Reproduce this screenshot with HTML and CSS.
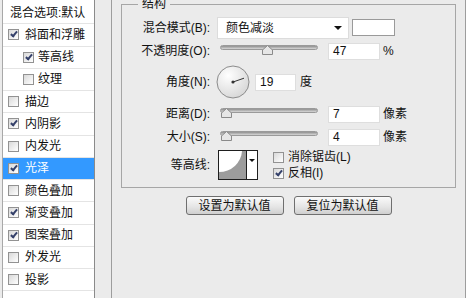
FILE: index.html
```html
<!DOCTYPE html>
<html lang="zh-CN">
<head>
  <meta charset="UTF-8">
  <title>图层样式 - 光泽</title>
  <link rel="stylesheet" href="styles.css">
</head>
<body>
  <ul class="style-list">
    <li class="style-item head">混合选项:默认</li>
    <li class="style-item"><span class="check is-on"></span>斜面和浮雕</li>
    <li class="style-item sub"><span class="check is-on"></span>等高线</li>
    <li class="style-item sub"><span class="check"></span>纹理</li>
    <li class="style-item"><span class="check"></span>描边</li>
    <li class="style-item"><span class="check is-on"></span>内阴影</li>
    <li class="style-item"><span class="check"></span>内发光</li>
    <li class="style-item is-selected"><span class="check is-on"></span>光泽</li>
    <li class="style-item"><span class="check"></span>颜色叠加</li>
    <li class="style-item"><span class="check is-on"></span>渐变叠加</li>
    <li class="style-item"><span class="check is-on"></span>图案叠加</li>
    <li class="style-item"><span class="check"></span>外发光</li>
    <li class="style-item"><span class="check"></span>投影</li>
  </ul>

  <div class="style-panel">
    <div class="group">
      <span class="group-title">结构</span>

      <div class="row row-blend">
        <label class="row-label">混合模式(B):</label>
        <div class="select">颜色减淡<span class="select-arrow"></span></div>
        <span class="swatch"></span>
      </div>

      <div class="row row-opacity">
        <label class="row-label">不透明度(O):</label>
        <div class="slider">
          <span class="track"></span>
          <svg class="thumb" style="left: 45px" width="11" height="10" viewBox="0 0 11 10">
            <path d="M5.5 0.5 L10.5 5 V9.5 H0.5 V5 Z" fill="#e6e6e6" stroke="#8a8a8a"/>
          </svg>
        </div>
        <span class="field">47</span>
        <span class="unit">%</span>
      </div>

      <div class="row row-angle">
        <label class="row-label">角度(N):</label>
        <svg class="dial" width="34" height="34" viewBox="0 0 34 34">
          <defs>
            <radialGradient id="dial-fill" cx="0.35" cy="0.3" r="0.8">
              <stop offset="0" stop-color="#ffffff"/>
              <stop offset="1" stop-color="#d4d4d4"/>
            </radialGradient>
          </defs>
          <circle cx="17" cy="17" r="16" fill="url(#dial-fill)" stroke="#8c8c8c"/>
          <line x1="17" y1="17" x2="28" y2="13.2" stroke="#333" stroke-width="1"/>
          <circle cx="17" cy="17" r="1.6" fill="#333"/>
        </svg>
        <span class="field field-short">19</span>
        <span class="unit">度</span>
      </div>

      <div class="row row-distance">
        <label class="row-label">距离(D):</label>
        <div class="slider">
          <span class="track"></span>
          <svg class="thumb" style="left: 4px" width="11" height="10" viewBox="0 0 11 10">
            <path d="M5.5 0.5 L10.5 5 V9.5 H0.5 V5 Z" fill="#e6e6e6" stroke="#8a8a8a"/>
          </svg>
        </div>
        <span class="field">7</span>
        <span class="unit">像素</span>
      </div>

      <div class="row row-size">
        <label class="row-label">大小(S):</label>
        <div class="slider">
          <span class="track"></span>
          <svg class="thumb" style="left: 4px" width="11" height="10" viewBox="0 0 11 10">
            <path d="M5.5 0.5 L10.5 5 V9.5 H0.5 V5 Z" fill="#e6e6e6" stroke="#8a8a8a"/>
          </svg>
        </div>
        <span class="field">4</span>
        <span class="unit">像素</span>
      </div>

      <div class="row row-contour">
        <label class="row-label">等高线:</label>
        <div class="contour">
          <svg class="contour-curve" width="27" height="28" viewBox="0 0 27 28">
            <rect width="27" height="28" fill="#9c9c9c"/>
            <path d="M0 0 H23 A23 22 0 0 1 0 21 Z" fill="#ffffff"/>
          </svg>
          <span class="contour-drop"><span class="select-arrow"></span></span>
        </div>
        <div class="options">
          <div class="option"><span class="check"></span>消除锯齿(L)</div>
          <div class="option"><span class="check is-on"></span>反相(I)</div>
        </div>
      </div>
    </div>

    <div class="button-row">
      <button class="button">设置为默认值</button>
      <button class="button">复位为默认值</button>
    </div>
  </div>
</body>
</html>
```

FILE: styles.css
```css
body {
  margin: 0;
  height: 298px;
  overflow: hidden;
  display: flex;
  background-color: #ebebeb;
  color: #111111;
  font-family: "Liberation Sans", "Noto Sans CJK SC", sans-serif;
  font-size: 12px;
  line-height: 16px;
}

/* left column: list of layer effects */

.style-list {
  list-style: none;
  margin: 0 0 0 2px;
  padding: 2px 0 0;
  width: 91px;
  background-color: #ffffff;
  border-left: 1px solid #a8a8a8;
  border-right: 1px solid #8a8a8a;
}

.style-item {
  height: 22.25px;
  box-sizing: border-box;
  display: flex;
  align-items: center;
  gap: 6px;
  padding-left: 5px;
  border-bottom: 1px solid #e4e4e4;
  white-space: nowrap;
}

.style-item.head {
  padding-left: 7px;
}

.style-item.sub {
  padding-left: 20px;
  gap: 4px;
}

.style-item.is-selected {
  background-color: #3399ff;
  color: #ffffff;
}

.check {
  width: 11px;
  height: 11px;
  box-sizing: border-box;
  flex: none;
  display: flex;
  justify-content: center;
  border: 1px solid #929292;
  background: linear-gradient(135deg, #d9d9d9, #ffffff);
}

.check.is-on::after {
  content: "";
  width: 2px;
  height: 5px;
  margin-top: 0;
  border-right: 2px solid #34406a;
  border-bottom: 2px solid #34406a;
  transform: rotate(40deg);
}

/* right column: effect settings */

.style-panel {
  flex: 1;
  margin-left: 16px;
  border-left: 1px solid #9d9d9d;
  border-right: 1px solid #9d9d9d;
}

.group {
  margin: 4px 9px 0;
  padding: 0 0 5px;
  border: 1px solid #a6a6a6;
}

.group-title {
  display: block;
  width: fit-content;
  margin: -9px 0 3px 16px;
  padding: 0 4px;
  background-color: #ebebeb;
}

.row {
  display: flex;
  align-items: center;
}

.row-blend { height: 25px; }
.row-opacity { height: 22px; }
.row-angle { height: 40px; }
.row-distance { height: 24px; }
.row-size { height: 22px; }
.row-contour { height: 34px; }

.row-label {
  width: 88px;
  margin-right: 7px;
  text-align: right;
  white-space: nowrap;
}

.select {
  width: 132px;
  height: 22px;
  box-sizing: border-box;
  display: flex;
  align-items: center;
  justify-content: space-between;
  padding: 0 6px 0 8px;
  background-color: #ffffff;
  border: 1px solid #dcdcdc;
}

.select-arrow {
  width: 0;
  height: 0;
  border-left: 4px solid transparent;
  border-right: 4px solid transparent;
  border-top: 4px solid #111111;
}

.swatch {
  width: 43px;
  height: 17px;
  box-sizing: border-box;
  margin-left: 3px;
  background-color: #ffffff;
  border: 1px solid #9a9a9a;
}

.slider {
  position: relative;
  width: 101px;
  height: 14px;
  display: flex;
  align-items: flex-start;
  padding-left: 3px;
  box-sizing: border-box;
}

.track {
  width: 98px;
  height: 5px;
  margin-top: 1px;
  box-sizing: border-box;
  border-radius: 3px;
  border: 1px solid #9a9a9a;
  background: linear-gradient(#8f8f8f, #d8d8d8);
}

.thumb {
  position: absolute;
  top: 1px;
}

.field {
  width: 52px;
  height: 17px;
  box-sizing: border-box;
  margin-left: 10px;
  padding-left: 4px;
  background-color: #ffffff;
  border: 1px solid #dedede;
  line-height: 15px;
}

.field-short {
  width: 41px;
  margin-left: 5px;
}

.unit {
  margin-left: 3px;
}

.row-angle .unit {
  margin-left: 4px;
}

.dial {
  margin-left: -1px;
}

.contour {
  display: flex;
  margin-left: 1px;
  height: 30px;
  box-sizing: border-box;
  border: 1px solid #1e1e1e;
  background-color: #ffffff;
}

.contour-drop {
  width: 11px;
  display: flex;
  justify-content: center;
  padding-top: 8px;
  box-sizing: border-box;
  border-left: 1px solid #1e1e1e;
}

.contour-drop .select-arrow {
  border-left-width: 3px;
  border-right-width: 3px;
  border-top-width: 3px;
}

.options {
  display: flex;
  flex-direction: column;
  gap: 0;
  margin-left: 15px;
}

.option {
  display: flex;
  align-items: center;
  gap: 4px;
  height: 16px;
  white-space: nowrap;
}

.button-row {
  display: flex;
  justify-content: center;
  gap: 10px;
  margin-top: 8px;
}

.button {
  width: 98px;
  height: 19px;
  padding: 0;
  font: inherit;
  color: #111111;
  border: 1px solid #6f6f6f;
  border-radius: 3px;
  background: linear-gradient(#fafafa, #e4e4e4 60%, #cfcfcf);
}
```
